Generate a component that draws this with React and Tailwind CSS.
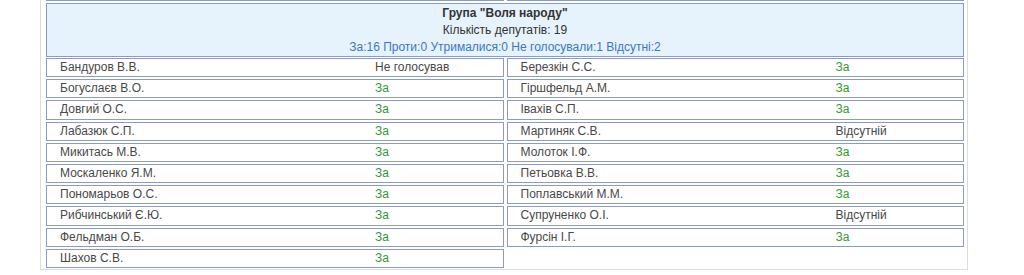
import React from "react";

const left = [
  ["Бандуров В.В.", "Не голосував"],
  ["Богуслаєв В.О.", "За"],
  ["Довгий О.С.", "За"],
  ["Лабазюк С.П.", "За"],
  ["Микитась М.В.", "За"],
  ["Москаленко Я.М.", "За"],
  ["Пономарьов О.С.", "За"],
  ["Рибчинський Є.Ю.", "За"],
  ["Фельдман О.Б.", "За"],
  ["Шахов С.В.", "За"],
];
const right = [
  ["Березкін С.С.", "За"],
  ["Гіршфельд А.М.", "За"],
  ["Іващів С.П.".replace("щ", "х"), "За"],
  ["Мартиняк С.В.", "Відсутній"],
  ["Молоток І.Ф.", "За"],
  ["Петьовка В.В.", "За"],
  ["Поплавський М.М.", "За"],
  ["Супруненко О.І.", "Відсутній"],
  ["Фурсін І.Г.", "За"],
];

function Row({ name, vote }) {
  return (
    <div className="flex h-[19.2px] items-center border border-[#8c9bc5] bg-white">
      <div className="w-[328px] pl-[13px] text-[#484848]">{name}</div>
      <div className={vote === "За" ? "text-[#2f9a2f]" : "text-[#484848]"}>{vote}</div>
    </div>
  );
}

export default function App() {
  return (
    <div className="h-[275px] bg-white" style={{ fontFamily: '"Liberation Sans", Arial, sans-serif' }}>
      <div className="ml-[40px] w-[928px] border-x border-b border-[#dcdcdc] pb-[1px] pl-[5px] pr-[3px] text-[12px] leading-[17px]">
        <div className="flex gap-[3px]">
          <div className="h-[1px] flex-1 bg-[#8c9bc5]" />
          <div className="h-[1px] flex-1 bg-[#8c9bc5]" />
        </div>
        <div className="mt-[2px] flex h-[54px] flex-col items-center justify-center border border-[#8c9bc5] bg-[#e6f2fc] pt-[1px] text-[#333]">
          <div className="font-bold">Група "Воля народу"</div>
          <div>Кількість депутатів: 19</div>
          <div className="text-[#3a78c3]">За:16 Проти:0 Утрималися:0 Не голосували:1 Відсутні:2</div>
        </div>
        <div className="mt-[1px] grid grid-cols-2 gap-x-[3px]">
          <div className="flex flex-col gap-[2px]">
            {left.map(([n, v]) => (
              <Row key={n} name={n} vote={v} />
            ))}
          </div>
          <div className="flex flex-col gap-[2px]">
            {right.map(([n, v]) => (
              <Row key={n} name={n} vote={v} />
            ))}
          </div>
        </div>
      </div>
    </div>
  );
}
